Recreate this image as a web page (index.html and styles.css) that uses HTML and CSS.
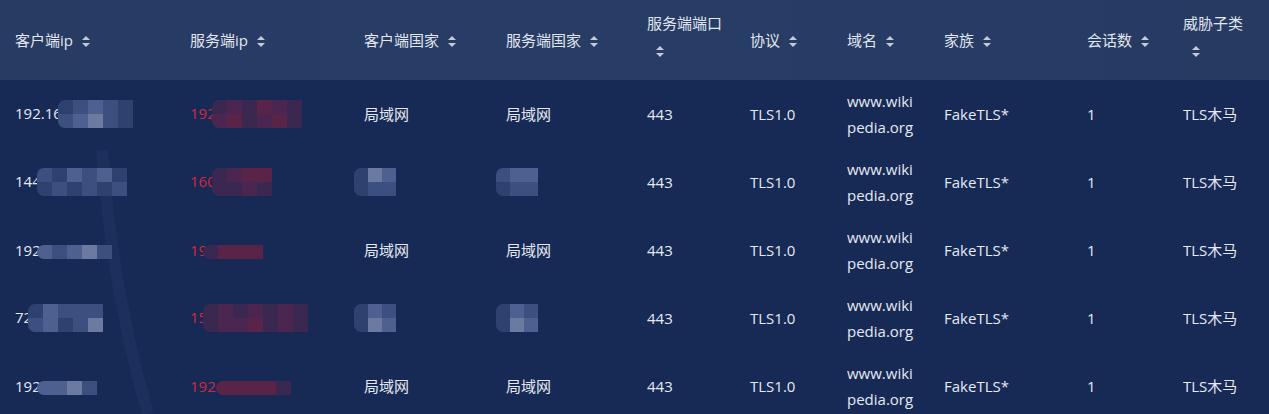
FILE: index.html
```html
<!DOCTYPE html>
<html lang="zh">
<head>
<meta charset="utf-8">
<link rel="stylesheet" href="styles.css">
</head>
<body>
<div class="panel">
  <svg class="deco" width="1269" height="414" viewBox="0 0 1269 414">
    <path d="M735 0 Q820 30 880 80" stroke="rgba(120,150,200,0.16)" stroke-width="2" fill="none"/>
    <path d="M102 150 Q112 290 148 414" stroke="rgba(90,130,190,0.07)" stroke-width="12" fill="none"/>
  </svg>
  <table class="grid">
    <colgroup>
      <col class="c1"><col class="c2"><col class="c3"><col class="c4"><col class="c5">
      <col class="c6"><col class="c7"><col class="c8"><col class="c9"><col class="c10">
    </colgroup>
    <thead>
      <tr>
        <th>客户端ip<i class="sort"></i></th>
        <th>服务端ip<i class="sort"></i></th>
        <th>客户端国家<i class="sort"></i></th>
        <th>服务端国家<i class="sort"></i></th>
        <th class="wrap">服务端端口<br><i class="sort solo"></i></th>
        <th>协议<i class="sort"></i></th>
        <th>域名<i class="sort"></i></th>
        <th>家族<i class="sort"></i></th>
        <th>会话数<i class="sort"></i></th>
        <th class="wrap">威胁子类<br><i class="sort solo"></i></th>
      </tr>
    </thead>
    <tbody>
      <tr>
        <td>192.16<span class="mz two w5 g"><b class="a"></b><b class="b"></b><b class="c"></b><b class="b"></b><b class="a"></b><b class="b"></b><b class="c"></b><b class="d"></b><b class="b"></b><b class="a"></b></span></td>
        <td class="red">192<span class="mz two w6 r"><b class="a"></b><b class="b"></b><b class="a"></b><b class="c"></b><b class="b"></b><b class="a"></b><b class="b"></b><b class="c"></b><b class="a"></b><b class="b"></b><b class="c"></b><b class="a"></b></span></td>
        <td>局域网</td>
        <td>局域网</td>
        <td>443</td>
        <td>TLS1.0</td>
        <td class="dom">www.wikipedia.org</td>
        <td>FakeTLS*</td>
        <td>1</td>
        <td>TLS木马</td>
      </tr>
      <tr>
        <td>144<span class="mz two w6 g"><b class="b"></b><b class="a"></b><b class="c"></b><b class="b"></b><b class="c"></b><b class="a"></b><b class="a"></b><b class="b"></b><b class="a"></b><b class="b"></b><b class="a"></b><b class="b"></b></span></td>
        <td class="red">160<span class="mz two w4 r"><b class="a"></b><b class="b"></b><b class="c"></b><b class="c"></b><b class="a"></b><b class="a"></b><b class="b"></b><b class="a"></b></span></td>
        <td><span class="mz two w3 g solo"><b class="a"></b><b class="d"></b><b class="c"></b><b class="a"></b><b class="b"></b><b class="b"></b></span></td>
        <td><span class="mz two w3 g solo"><b class="b"></b><b class="c"></b><b class="c"></b><b class="a"></b><b class="b"></b><b class="b"></b></span></td>
        <td>443</td>
        <td>TLS1.0</td>
        <td class="dom">www.wikipedia.org</td>
        <td>FakeTLS*</td>
        <td>1</td>
        <td>TLS木马</td>
      </tr>
      <tr>
        <td>192<span class="mz w5 g"><b class="c"></b><b class="b"></b><b class="c"></b><b class="d"></b><b class="b"></b></span></td>
        <td class="red">19<span class="mz w4 r"><b class="a"></b><b class="c"></b><b class="c"></b><b class="c"></b></span></td>
        <td>局域网</td>
        <td>局域网</td>
        <td>443</td>
        <td>TLS1.0</td>
        <td class="dom">www.wikipedia.org</td>
        <td>FakeTLS*</td>
        <td>1</td>
        <td>TLS木马</td>
      </tr>
      <tr>
        <td>72<span class="mz two w5 g"><b class="a"></b><b class="c"></b><b class="b"></b><b class="b"></b><b class="b"></b><b class="b"></b><b class="c"></b><b class="a"></b><b class="b"></b><b class="d"></b></span></td>
        <td class="red">15<span class="mz two w7 r"><b class="a"></b><b class="b"></b><b class="a"></b><b class="b"></b><b class="a"></b><b class="b"></b><b class="a"></b><b class="a"></b><b class="b"></b><b class="b"></b><b class="c"></b><b class="a"></b><b class="b"></b><b class="a"></b></span></td>
        <td><span class="mz two w3 g solo"><b class="a"></b><b class="c"></b><b class="b"></b><b class="a"></b><b class="d"></b><b class="c"></b></span></td>
        <td><span class="mz two w3 g solo"><b class="a"></b><b class="c"></b><b class="b"></b><b class="a"></b><b class="d"></b><b class="c"></b></span></td>
        <td>443</td>
        <td>TLS1.0</td>
        <td class="dom">www.wikipedia.org</td>
        <td>FakeTLS*</td>
        <td>1</td>
        <td>TLS木马</td>
      </tr>
      <tr>
        <td>192<span class="mz w4 g"><b class="c"></b><b class="c"></b><b class="d"></b><b class="b"></b></span></td>
        <td class="red">192.<span class="mz w5 r"><b class="c"></b><b class="c"></b><b class="c"></b><b class="c"></b><b class="a"></b></span></td>
        <td>局域网</td>
        <td>局域网</td>
        <td>443</td>
        <td>TLS1.0</td>
        <td class="dom">www.wikipedia.org</td>
        <td>FakeTLS*</td>
        <td>1</td>
        <td>TLS木马</td>
      </tr>
    </tbody>
  </table>
</div>
</body>
</html>
```

FILE: styles.css
```css
html, body {
  margin: 0;
  padding: 0;
  background: #172a56;
}

.panel {
  position: relative;
  width: 1269px;
  height: 414px;
  overflow: hidden;
  background: #172a56;
  font-family: "Open Sans", "Noto Sans CJK SC", sans-serif;
}

.deco {
  position: absolute;
  left: 0;
  top: 0;
  pointer-events: none;
  z-index: 1;
}

.grid {
  position: relative;
  z-index: 2;
  width: 1269px;
  border-collapse: collapse;
  table-layout: fixed;
  color: #e6e9f1;
  font-size: 15px;
}

.c1 { width: 175px; }
.c2 { width: 174px; }
.c3 { width: 142px; }
.c4 { width: 141px; }
.c5 { width: 103px; }
.c6 { width: 97px; }
.c7 { width: 97px; }
.c8 { width: 143px; }
.c9 { width: 96px; }
.c10 { width: 102px; }

thead tr {
  height: 80px;
  background: linear-gradient(90deg, #273b63 0%, #283d66 50%, #263a62 100%);
}

th {
  text-align: left;
  font-weight: normal;
  padding: 0 8px 0 15px;
  color: #e1e6f0;
  line-height: 27px;
  vertical-align: middle;
  white-space: nowrap;
}

th.wrap {
  white-space: normal;
  padding-bottom: 6px;
}

tbody tr {
  height: 68px;
}

td {
  padding: 0 8px 0 15px;
  vertical-align: middle;
  line-height: 26px;
  white-space: nowrap;
}

td.dom {
  white-space: normal;
  word-break: break-all;
  padding-right: 12px;
}

td.red {
  color: #d6253f;
}

.sort {
  position: relative;
  display: inline-block;
  width: 9px;
  height: 11px;
  margin-left: 9px;
  vertical-align: -1px;
}

.sort::before,
.sort::after {
  content: "";
  position: absolute;
  left: 0;
  width: 0;
  height: 0;
  border-left: 4.5px solid transparent;
  border-right: 4.5px solid transparent;
}

.sort::before {
  top: 0;
  border-bottom: 4.5px solid #c3c9d6;
}

.sort::after {
  bottom: 0;
  border-top: 4.5px solid #c3c9d6;
}

.sort.solo {
  margin-left: 9px;
}

/* pixelated mosaic masks */
.mz {
  display: inline-grid;
  grid-auto-rows: 14px;
  vertical-align: middle;
  margin-left: -4px;
  border-radius: 7px 0 0 7px;
  overflow: hidden;
}
.mz.solo { margin-left: -10px; }
.mz.two { grid-template-rows: 14px 14px; }
.w3 { grid-template-columns: repeat(3, 14px); }
.w4 { grid-template-columns: repeat(4, 15px); }
.w5 { grid-template-columns: repeat(5, 15px); }
.w6 { grid-template-columns: repeat(6, 15px); }
.w7 { grid-template-columns: repeat(7, 15px); }
.mz b { display: block; }

.g .a { background: #2e4270; }
.g .b { background: #3c5080; }
.g .c { background: #4d6090; }
.g .d { background: #6a7aa0; }

.r .a { background: #3a2850; }
.r .b { background: #4a2650; }
.r .c { background: #5a2449; }
```
